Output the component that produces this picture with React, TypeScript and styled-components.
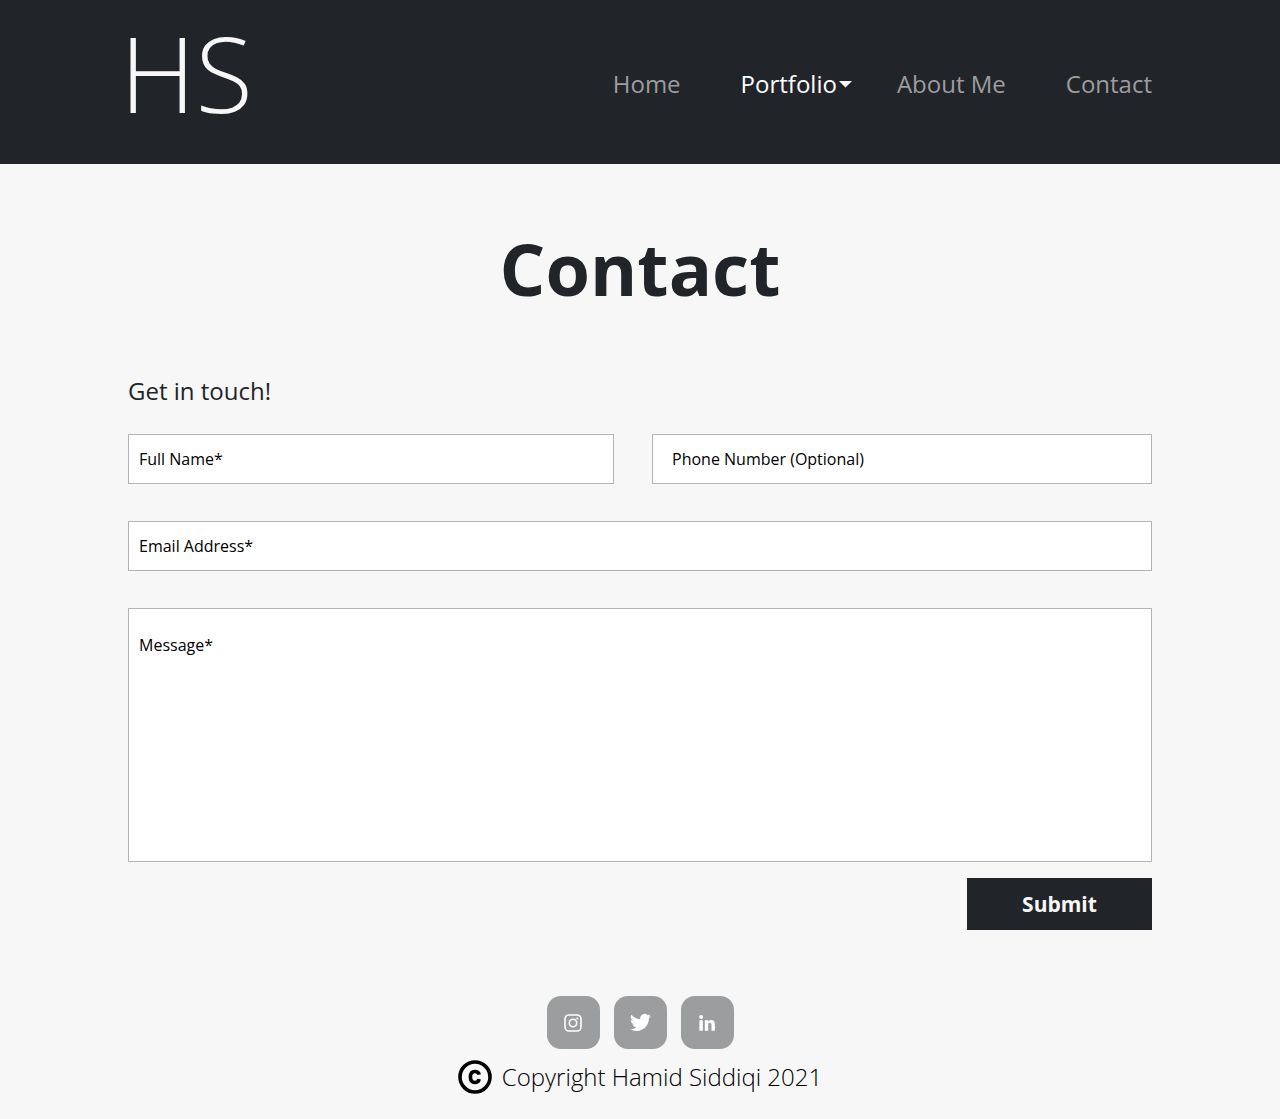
import React from "react";
import styled, { createGlobalStyle } from "styled-components";

const dark = "#212529";
const light = "#f7f7f7";
const grey = "#9c9d9e";

const GlobalStyle = createGlobalStyle`
  *, *::before, *::after { box-sizing: border-box; }
  body {
    margin: 0;
    background: ${light};
    color: ${dark};
    font-family: "Open Sans", "Noto Sans", sans-serif;
  }
`;

const Header = styled.header`
  display: flex;
  align-items: center;
  justify-content: space-between;
  min-height: 164px;
  padding: 0 10% 18px;
  background: ${dark};
`;

const Logo = styled.a`
  color: ${light};
  font-size: 105px;
  font-weight: 300;
  line-height: 144px;
  margin-left: -8px;
  text-decoration: none;
`;

const Nav = styled.nav`
  display: flex;
  align-items: center;
  gap: 60px;
  padding-top: 22px;
`;

const NavLink = styled.a`
  color: ${grey};
  font-size: 24px;
  line-height: 32px;
  text-decoration: none;
`;

const NavMenu = styled.button`
  display: flex;
  align-items: center;
  gap: 2px;
  margin-right: -15px;
  padding: 0;
  border: 0;
  background: none;
  color: #fff;
  font: inherit;
  font-size: 24px;
  line-height: 32px;
  cursor: pointer;
`;

const Main = styled.main`
  padding: 55px 10% 0;
`;

const Title = styled.h1`
  margin: 0;
  font-size: 72px;
  font-weight: 700;
  line-height: 98px;
  text-align: center;
`;

const Intro = styled.h2`
  margin: 58px 0 27px;
  font-size: 24px;
  font-weight: 400;
  line-height: 32px;
`;

const Form = styled.form`
  display: grid;
  grid-template-columns: 486fr 500fr;
  gap: 37px 38px;
`;

const Field = styled.input<{ $wide?: boolean; $inset?: number }>`
  grid-column: ${(p) => (p.$wide ? "1 / -1" : "auto")};
  width: 100%;
  height: 50px;
  padding: 0 ${(p) => p.$inset ?? 10}px;
  border: 1px solid #b4b4b4;
  border-radius: 0;
  background: #fff;
  color: #000;
  font: inherit;
  font-size: 16px;
  &::placeholder { color: #000; opacity: 1; }
`;

const Message = styled.textarea`
  grid-column: 1 / -1;
  width: 100%;
  height: 254px;
  padding: 24px 10px;
  border: 1px solid #b4b4b4;
  border-radius: 0;
  background: #fff;
  color: #000;
  font: inherit;
  font-size: 16px;
  line-height: 24px;
  resize: none;
  &::placeholder { color: #000; opacity: 1; }
`;

const Submit = styled.button`
  grid-column: 1 / -1;
  justify-self: end;
  width: 185px;
  height: 52px;
  margin-top: -21px;
  border: 0;
  background: ${dark};
  color: ${light};
  font: inherit;
  font-size: 21px;
  font-weight: 700;
  cursor: pointer;
`;

const Footer = styled.footer`
  display: flex;
  flex-direction: column;
  align-items: center;
  gap: 11px;
  padding: 66px 10% 24px;
`;

const Socials = styled.div`
  display: flex;
  gap: 14px;
`;

const Social = styled.a`
  display: flex;
  align-items: center;
  justify-content: center;
  width: 53px;
  height: 53px;
  border-radius: 14px;
  background: ${grey};
  color: #fff;
`;

const Copyright = styled.p`
  display: flex;
  align-items: center;
  gap: 10px;
  margin: 0;
  color: #000;
  font-size: 24px;
  font-weight: 300;
  line-height: 34px;
`;

export default function App() {
  return (
    <>
      <GlobalStyle />
      <Header>
        <Logo href="#home">HS</Logo>
        <Nav aria-label="Main">
          <NavLink href="#home">Home</NavLink>
          <NavMenu type="button" aria-haspopup="menu">
            Portfolio
            <svg width="13" height="7" viewBox="0 0 13 7" aria-hidden="true">
              <path d="M0 0h13L6.5 6.5z" fill="currentColor" />
            </svg>
          </NavMenu>
          <NavLink href="#about">About Me</NavLink>
          <NavLink href="#contact">Contact</NavLink>
        </Nav>
      </Header>
      <Main>
        <Title>Contact</Title>
        <Intro>Get in touch!</Intro>
        <Form onSubmit={(e) => e.preventDefault()}>
          <Field type="text" aria-label="Full Name" placeholder="Full Name*" required />
          <Field type="tel" aria-label="Phone Number" placeholder="Phone Number (Optional)" $inset={19} />
          <Field type="email" aria-label="Email Address" placeholder="Email Address*" required $wide />
          <Message aria-label="Message" placeholder="Message*" required />
          <Submit type="submit">Submit</Submit>
        </Form>
      </Main>
      <Footer>
        <Socials>
          <Social href="#instagram" aria-label="Instagram">
            <svg width="18" height="18" viewBox="0 0 18 18" fill="none" stroke="currentColor" strokeWidth="1.6">
              <rect x="1" y="1" width="16" height="16" rx="4" />
              <circle cx="9" cy="9" r="3.7" />
              <circle cx="13.3" cy="4.6" r="1" fill="currentColor" stroke="none" />
            </svg>
          </Social>
          <Social href="#twitter" aria-label="Twitter">
            <svg width="21" height="21" viewBox="0 0 24 24" fill="currentColor">
              <path d="M23.95 4.57a10 10 0 0 1-2.82.77 4.96 4.96 0 0 0 2.16-2.72c-.95.55-2 .95-3.13 1.18a4.92 4.92 0 0 0-8.38 4.48C7.69 8.1 4.07 6.13 1.64 3.16a4.92 4.92 0 0 0 1.52 6.57 4.9 4.9 0 0 1-2.23-.61v.06a4.92 4.92 0 0 0 3.95 4.83 5 5 0 0 1-2.21.08 4.94 4.94 0 0 0 4.6 3.42A9.87 9.87 0 0 1 0 19.54a13.99 13.99 0 0 0 7.55 2.21c9.05 0 14-7.5 14-13.98 0-.21 0-.42-.02-.63a9.94 9.94 0 0 0 2.42-2.57z" />
            </svg>
          </Social>
          <Social href="#linkedin" aria-label="LinkedIn">
            <svg width="16" height="16" viewBox="0 0 16 16" fill="currentColor">
              <circle cx="2.1" cy="2" r="2" />
              <path d="M.4 5.2h3.4v10.5H.4zM5.800 5.200h3.200v1.400c.5-.9 1.500-1.700 3-1.700 3.100 0 3.900 2 3.900 4.800v6h-3.400v-5.200c0-1.300 0-2.800-1.600-2.800S9.200 9 9.200 10.400v5.300H5.800z" />
            </svg>
          </Social>
        </Socials>
        <Copyright>
          <svg width="34" height="34" viewBox="0 0 34 34" fill="none" stroke="#000" aria-hidden="true">
            <circle cx="17" cy="17" r="15" strokeWidth="3.6" />
            <path d="M21.2 14.7C20.7 12.500 19.200 11.500 17 11.500c-3 0-4.600 2-4.600 5.500s1.600 5.500 4.600 5.500c2.200 0 3.700-1.100 4.200-3.300" strokeWidth="3.6" />
          </svg>
          Copyright Hamid Siddiqi 2021
        </Copyright>
      </Footer>
    </>
  );
}
